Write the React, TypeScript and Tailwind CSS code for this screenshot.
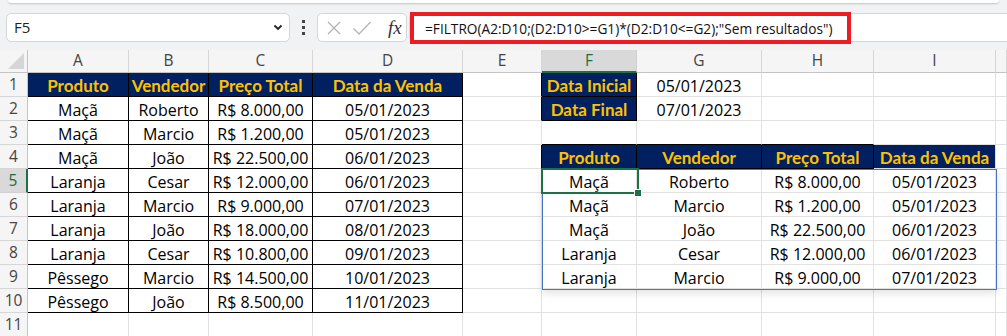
import React from 'react';

type Cell = { v: string; h?: boolean };

const COLS = ['A', 'B', 'C', 'D', 'E', 'F', 'G', 'H', 'I', ''];
const ROWS = [1, 2, 3, 4, 5, 6, 7, 8, 9, 10, 11];

const sheet: Record<string, Cell> = {};
const put = (r: number, c: number, vals: string[], h = false) =>
  vals.forEach((v, i) => (sheet[`${r}-${c + i}`] = { v, h }));

const headers = ['Produto', 'Vendedor', 'Preço Total', 'Data da Venda'];
const vendas = [
  ['Maçã', 'Roberto', 'R$ 8.000,00', '05/01/2023'],
  ['Maçã', 'Marcio', 'R$ 1.200,00', '05/01/2023'],
  ['Maçã', 'João', 'R$ 22.500,00', '06/01/2023'],
  ['Laranja', 'Cesar', 'R$ 12.000,00', '06/01/2023'],
  ['Laranja', 'Marcio', 'R$ 9.000,00', '07/01/2023'],
  ['Laranja', 'João', 'R$ 18.000,00', '08/01/2023'],
  ['Laranja', 'Cesar', 'R$ 10.800,00', '09/01/2023'],
  ['Pêssego', 'Marcio', 'R$ 14.500,00', '10/01/2023'],
  ['Pêssego', 'João', 'R$ 8.500,00', '11/01/2023'],
];

put(1, 0, headers, true);
vendas.forEach((row, i) => put(i + 2, 0, row));
put(1, 5, ['Data Inicial'], true);
put(1, 6, ['05/01/2023']);
put(2, 5, ['Data Final'], true);
put(2, 6, ['07/01/2023']);
put(4, 5, headers, true);
vendas.slice(0, 5).forEach((row, i) => put(i + 5, 5, row));

// cells that carry a black outline
const black = (r: number, c: number) =>
  (r >= 1 && r <= 10 && c >= 0 && c <= 3) ||
  (c === 5 && (r === 1 || r === 2)) ||
  (r === 4 && c >= 5 && c <= 7);

const XIcon = () => (
  <svg width="16" height="16" viewBox="0 0 16 16" fill="none" stroke="#b4b4b4" strokeWidth="1.3">
    <path d="M2 2l12 12M14 2L2 14" />
  </svg>
);

const CheckIcon = () => (
  <svg width="20" height="16" viewBox="0 0 20 16" fill="none" stroke="#b4b4b4" strokeWidth="1.3">
    <path d="M1.5 8.5l5.5 5.5L18.5 2" />
  </svg>
);

const FormulaBar = () => (
  <div className="h-[50px] bg-[#f0f2f4] flex flex-col">
    <div className="h-[3px] mx-[8px] bg-white rounded-b-lg shadow-[0_1px_2px_rgba(0,0,0,0.2)]" />
    <div className="flex items-center mt-[10px] h-[29px]">
      <div className="ml-[6px] w-[284px] h-full bg-white border border-[#d6d6d6] rounded-[5px] flex items-center justify-between pl-[7px] pr-[6px] text-[15px] text-[#222]">
        <span>F5</span>
        <svg width="10" height="7" viewBox="0 0 10 7" fill="none" stroke="#222" strokeWidth="1.8">
          <path d="M1.5 1.5l3.5 3.5 3.5-3.5" />
        </svg>
      </div>
      <div className="w-[27px] flex flex-col items-center gap-[3px]">
        <span className="w-[3px] h-[3px] bg-[#444]" />
        <span className="w-[3px] h-[3px] bg-[#444]" />
        <span className="w-[3px] h-[3px] bg-[#444]" />
      </div>
      <div className="w-[90px] h-full bg-white border border-[#d6d6d6] rounded-[5px] flex items-center pl-[8px] gap-[10px]">
        <XIcon />
        <CheckIcon />
        <span className="ml-[6px] font-['Liberation_Serif',serif] italic text-[19px] text-[#333] leading-none">fx</span>
      </div>
      <div className="relative flex-1 ml-[2px] h-full bg-white border-y border-l border-[#d6d6d6] rounded-l-[5px]">
        <div className="absolute left-0 -top-[2px] w-[441px] h-[32px] border-4 border-[#ec1c24] flex items-center pl-[11px] pt-[3px] text-[13.7px] text-[#111] whitespace-nowrap">
          =FILTRO(A2:D10;(D2:D10&gt;=G1)*(D2:D10&lt;=G2);"Sem resultados")
        </div>
      </div>
    </div>
    <div className="flex-1" />
  </div>
);

const Corner = () => (
  <div className="h-[23px] bg-[#f5f5f5] border-r border-b border-[#c4c4c4] flex items-end justify-end pr-[3px] pb-[3px]">
    <svg width="16" height="16" viewBox="0 0 16 16">
      <path d="M16 0V16H0Z" fill="#d6d6d6" />
    </svg>
  </div>
);

export default function App() {
  return (
    <div className="w-[1007px] h-[336px] overflow-hidden bg-white font-['Open_Sans',sans-serif]">
      <FormulaBar />
      <div className="relative">
        <div className="grid grid-cols-[28px_101px_80px_104px_150px_79px_95px_125px_112px_122px_1fr]">
          <Corner />
          {COLS.map((c, i) => (
            <div
              key={c + i}
              className={`h-[23px] flex items-center justify-center text-[15.5px] border-r ${
                i === 5
                  ? 'bg-[#d9d9d9] text-[#1e6b3f] border-b-2 border-b-[#1e7145] border-r-[#d0d0d0]'
                  : 'bg-[#f5f5f5] text-[#444] border-b border-b-[#c4c4c4] border-r-[#d6d6d6]'
              }`}
            >
              {c}
            </div>
          ))}
          {ROWS.map((r) => (
            <React.Fragment key={r}>
              <div
                className={`h-[24px] flex items-center justify-center text-[15.5px] border-b ${
                  r === 5
                    ? 'bg-[#d9d9d9] text-[#1e6b3f] border-r-2 border-r-[#1e7145] border-b-[#d0d0d0]'
                    : 'bg-[#f5f5f5] text-[#444] border-r border-r-[#c4c4c4] border-b-[#d6d6d6]'
                }`}
              >
                {r}
              </div>
              {COLS.map((_, c) => {
                const cell = sheet[`${r}-${c}`];
                const rb = black(r, c) || black(r, c + 1);
                const bb = black(r, c) || black(r + 1, c);
                return (
                  <div
                    key={c}
                    className={`h-[24px] flex items-center justify-center pt-[2px] whitespace-nowrap overflow-hidden border-r border-b ${
                      rb ? 'border-r-black' : 'border-r-[#e1e1e1]'
                    } ${bb ? 'border-b-black' : 'border-b-[#e1e1e1]'} ${
                      cell?.h
                        ? "bg-[#002060] text-[#ffc000] font-bold font-['Lato',sans-serif] text-[17px]"
                        : 'text-black text-[16px]'
                    }`}
                  >
                    {cell?.v}
                  </div>
                );
              })}
            </React.Fragment>
          ))}
        </div>
        {/* spill range outline */}
        <div className="absolute left-[542px] top-[119px] w-[455px] h-[121px] border border-[#4a72c0] shadow-[0_3px_8px_rgba(0,0,0,0.12)] pointer-events-none" />
        {/* active cell F5 */}
        <div className="absolute left-[541px] top-[118px] w-[98px] h-[26px] border-2 border-[#1e7145] pointer-events-none">
          <div className="absolute -right-[4px] -bottom-[4px] w-[6px] h-[6px] bg-[#1e7145] outline outline-1 outline-white" />
        </div>
      </div>
    </div>
  );
}
